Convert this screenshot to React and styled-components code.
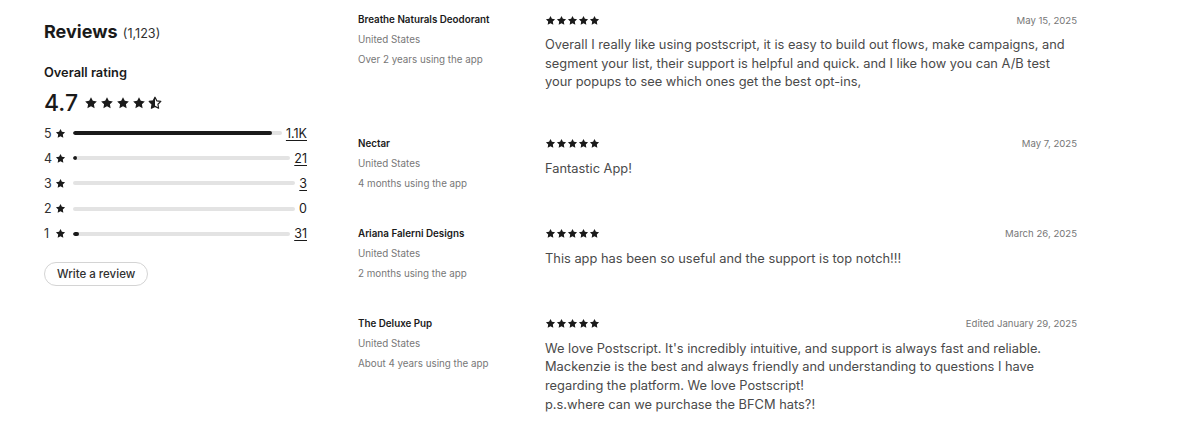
import React from 'react'
import styled, { createGlobalStyle } from 'styled-components'

const GlobalStyle = createGlobalStyle`
  body {
    margin: 0;
    background: #fff;
    font-family: Inter, "Noto Sans", sans-serif;
    color: #303030;
  }
`

const Page = styled.div`
  display: flex;
  align-items: flex-start;
  padding-left: 44px;
  width: 1200px;
  box-sizing: border-box;
`

const Summary = styled.div`
  width: 263px;
  flex-shrink: 0;
  padding-top: 20px;
  margin-right: 51px;
`

const Title = styled.h2`
  margin: 0;
  font-size: 18px;
  line-height: 24px;
  font-weight: 700;
  color: #1a1a1a;
`

const TitleCount = styled.span`
  font-size: 12.6px;
  font-weight: 400;
  color: #303030;
  margin-left: 1px;
`

const Label = styled.div`
  margin-top: 19px;
  font-size: 12.8px;
  line-height: 16px;
  font-weight: 600;
  color: #1a1a1a;
`

const Score = styled.div`
  margin-top: 8px;
  display: flex;
  align-items: center;
  gap: 6px;
  height: 28px;
  font-size: 23px;
  font-weight: 500;
  color: #1a1a1a;
`

const Stars = styled.div`
  display: flex;
  align-items: center;
  gap: ${p => p.$gap}px;
`

const Bars = styled.div`
  margin-top: 3.5px;
`

const BarRow = styled.div`
  display: flex;
  align-items: center;
  height: 25.2px;
  font-size: 12.5px;
  color: #303030;
`

const Digit = styled.span`
  width: 11px;
`

const Track = styled.div`
  flex: 1;
  height: 4px;
  margin: 0 4px 0 7px;
  border-radius: 2px;
  background: #e3e3e3;
  overflow: hidden;
`

const Fill = styled.div`
  height: 100%;
  border-radius: 2px;
  background: #1a1a1a;
`

const Count = styled.span`
  text-decoration: ${p => (p.$link ? 'underline' : 'none')};
  text-underline-offset: 2px;
  color: #1a1a1a;
`

const WriteButton = styled.button`
  margin-top: 16px;
  height: 24px;
  padding: 0 12px;
  border: 1px solid #d4d4d4;
  border-radius: 12px;
  background: #fff;
  font-family: inherit;
  font-size: 11.5px;
  font-weight: 500;
  color: #303030;
`

const List = styled.div`
  flex: 1;
  max-width: 719px;
  padding-top: 10px;
`

const Review = styled.div`
  display: flex;
  align-items: flex-start;
  padding-bottom: 30px;
`

const Meta = styled.div`
  width: 187px;
  flex-shrink: 0;
  font-size: 9.8px;
  line-height: 20px;
  color: #777;
`

const Author = styled.div`
  font-weight: 600;
  color: #1a1a1a;
`

const Content = styled.div`
  flex: 1;
`

const ContentHead = styled.div`
  display: flex;
  align-items: center;
  justify-content: space-between;
  height: 20px;
`

const Date = styled.span`
  font-size: 9.6px;
  color: #777;
`

const Body = styled.p`
  margin: 6px 0 12px;
  font-size: 12.85px;
  line-height: 18.6px;
  color: #4a4a4a;
  white-space: pre-line;
`

const STAR = 'M12 2l3.09 6.26L22 9.27l-5 4.87 1.18 6.88L12 17.77l-6.18 3.25L7 14.14 2 9.27l6.91-1.01L12 2z'

const Star = ({ size, half }) => (
  <svg width={size} height={size} viewBox="0 0 24 24">
    {half ? (
      <>
        <defs>
          <clipPath id="half-star">
            <rect x="0" y="0" width="12" height="24" />
          </clipPath>
        </defs>
        <path d={STAR} fill="none" stroke="#1a1a1a" strokeWidth="2" strokeLinejoin="round" />
        <path d={STAR} fill="#1a1a1a" clipPath="url(#half-star)" />
      </>
    ) : (
      <path d={STAR} fill="#1a1a1a" />
    )}
  </svg>
)

const breakdown = [
  { n: 5, count: 1068, label: '1.1K' },
  { n: 4, count: 21, label: '21' },
  { n: 3, count: 3, label: '3' },
  { n: 2, count: 0, label: '0' },
  { n: 1, count: 31, label: '31' },
]
const total = 1123

const reviews = [
  {
    author: 'Breathe Naturals Deodorant',
    usage: 'Over 2 years using the app',
    date: 'May 15, 2025',
    text: 'Overall I really like using postscript, it is easy to build out flows, make campaigns, and segment your list, their support is helpful and quick. and I like how you can A/B test your popups to see which ones get the best opt-ins,',
  },
  {
    author: 'Nectar',
    usage: '4 months using the app',
    date: 'May 7, 2025',
    text: 'Fantastic App!',
  },
  {
    author: 'Ariana Falerni Designs',
    usage: '2 months using the app',
    date: 'March 26, 2025',
    text: 'This app has been so useful and the support is top notch!!!',
  },
  {
    author: 'The Deluxe Pup',
    usage: 'About 4 years using the app',
    date: 'Edited January 29, 2025',
    text: "We love Postscript. It's incredibly intuitive, and support is always fast and reliable. Mackenzie is the best and always friendly and understanding to questions I have regarding the platform. We love Postscript!\np.s.where can we purchase the BFCM hats?!",
  },
]

const App = () => {
  return (
    <Page>
      <GlobalStyle />
      <Summary>
        <Title>
          Reviews <TitleCount>(1,123)</TitleCount>
        </Title>
        <Label>Overall rating</Label>
        <Score>
          4.7
          <Stars $gap={2}>
            {[0, 1, 2, 3].map(i => <Star key={i} size={14} />)}
            <Star size={14} half />
          </Stars>
        </Score>
        <Bars>
          {breakdown.map(b => (
            <BarRow key={b.n}>
              <Digit>{b.n}</Digit>
              <Star size={11} />
              <Track>
                <Fill style={{ width: b.count > 10 ? `max(${(b.count / total) * 100}%, 4px)` : 0 }} />
              </Track>
              <Count $link={b.count > 0}>{b.label}</Count>
            </BarRow>
          ))}
        </Bars>
        <WriteButton>Write a review</WriteButton>
      </Summary>
      <List>
        {reviews.map(r => (
          <Review key={r.author}>
            <Meta>
              <Author>{r.author}</Author>
              <div>United States</div>
              <div>{r.usage}</div>
            </Meta>
            <Content>
              <ContentHead>
                <Stars $gap={0}>
                  {[0, 1, 2, 3, 4].map(i => <Star key={i} size={11} />)}
                </Stars>
                <Date>{r.date}</Date>
              </ContentHead>
              <Body>{r.text}</Body>
            </Content>
          </Review>
        ))}
      </List>
    </Page>
  )
}

export default App
